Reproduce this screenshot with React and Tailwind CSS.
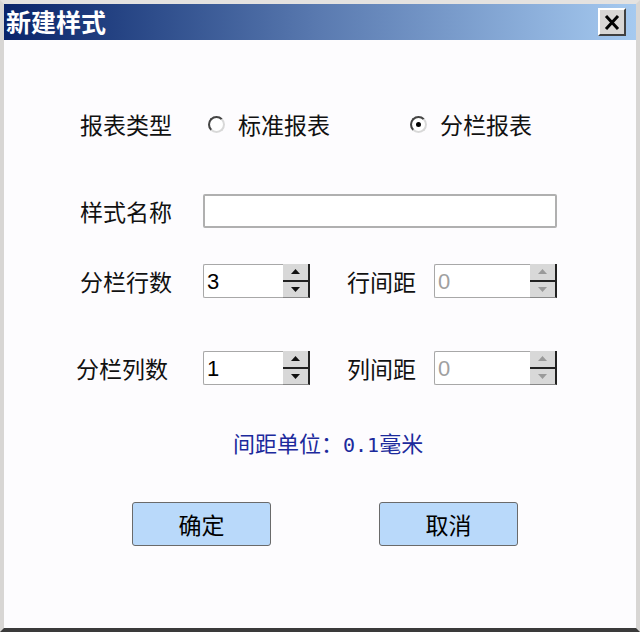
import React from "react";

const cjk = { fontFamily: '"Noto Sans CJK SC", "Noto Sans", sans-serif' };

const Radio = ({ checked }) => (
  <span className="relative inline-block h-[17px] w-[17px] rounded-full border-2 border-t-[#444] border-l-[#444] border-r-[#d8d8d8] border-b-[#d8d8d8] bg-white">
    {checked && (
      <span className="absolute left-[4px] top-[4px] h-[5px] w-[5px] rounded-full bg-black" />
    )}
  </span>
);

const Arrow = ({ up, disabled }) => (
  <svg width="9" height="5" viewBox="0 0 9 5">
    <path
      d={up ? "M4.5 0 L9 5 L0 5 Z" : "M0 0 L9 0 L4.5 5 Z"}
      fill={disabled ? "#9a9a9a" : "#111"}
    />
  </svg>
);

const Spinner = ({ value, width, disabled }) => (
  <div className="flex h-[34px]" style={{ width }}>
    <div
      className={`flex flex-1 items-center rounded-l-[2px] border border-r-0 border-[#a8a8a8] bg-white pl-[3px] text-[22px] ${
        disabled ? "text-[#a0a0a0]" : "text-black"
      }`}
      style={{ fontFamily: '"Liberation Sans", Arial, sans-serif' }}
    >
      {value}
    </div>
    <div className="flex w-[27px] flex-col border-r-2 border-b border-r-[#222] border-b-[#888] bg-[#c8c8c8]">
      <div className="flex flex-1 items-center justify-center border-b-2 border-[#222] bg-[#d8d8d8]">
        <Arrow up disabled={disabled} />
      </div>
      <div className="flex flex-1 items-center justify-center bg-[#d8d8d8]">
        <Arrow disabled={disabled} />
      </div>
    </div>
  </div>
);

const Button = ({ children }) => (
  <button className="flex h-[44px] w-[139px] items-center justify-center rounded-[3px] border border-[#6a6a6a] bg-[#b9d9fa] text-[23px] text-black">
    {children}
  </button>
);

export default function App() {
  return (
    <div
      className="flex h-[632px] w-[640px] flex-col border-x-4 border-t-4 border-b-[4px] border-x-[#d8d6d4] border-t-[#e4e2e0] border-b-[#3a3a3a] bg-[#d8d6d4]"
      style={cjk}
    >
      <div className="flex h-[36px] items-center justify-between bg-gradient-to-r from-[#0a246a] via-[#5a7ab0] to-[#a6caf0] pl-[2px] pr-[10px]">
        <span className="text-[25px] font-bold text-white">新建样式</span>
        <div className="flex h-[28px] w-[28px] items-center justify-center border-2 border-t-white border-l-white border-r-[#404040] border-b-[#404040] bg-[#d8d6d4]">
          <svg width="16" height="15" viewBox="0 0 16 15">
            <path d="M2 1 L14 14 M14 1 L2 14" stroke="#000" strokeWidth="3" />
          </svg>
        </div>
      </div>

      <div className="flex-1 bg-[#fdfcfe] pl-[72px] text-[23px] text-[#111]">
        <div className="mt-[67px] flex h-[34px] items-center">
          <span className="ml-[4px] w-[128px]">报表类型</span>
          <Radio />
          <span className="ml-[13px] w-[172px]">标准报表</span>
          <Radio checked />
          <span className="ml-[13px]">分栏报表</span>
        </div>

        <div className="mt-[53px] flex h-[34px] items-center">
          <span className="ml-[4px] w-[123px]">样式名称</span>
          <div className="h-[34px] w-[354px] rounded-[2px] border-2 border-[#b0b0b0] bg-white" />
        </div>

        <div className="mt-[36px] flex h-[34px] items-center">
          <span className="ml-[4px] w-[123px]">分栏行数</span>
          <Spinner value="3" width={107} />
          <span className="ml-[37px] w-[87px]">行间距</span>
          <Spinner value="0" width={123} disabled />
        </div>

        <div className="mt-[53px] flex h-[34px] items-center">
          <span className="w-[127px]">分栏列数</span>
          <Spinner value="1" width={107} />
          <span className="ml-[37px] w-[87px]">列间距</span>
          <Spinner value="0" width={123} disabled />
        </div>

        <p className="mt-[42px] h-[30px] pl-[157px] text-[22px] leading-[30px] text-[#1c2a9c]">
          间距单位：<span style={{ fontFamily: '"DejaVu Sans Mono", monospace' }} className="text-[20px]">0.1</span>毫米
        </p>

        <div className="mt-[45px] flex pl-[56px]">
          <Button>确定</Button>
          <div className="w-[108px]" />
          <Button>取消</Button>
        </div>
      </div>
    </div>
  );
}
